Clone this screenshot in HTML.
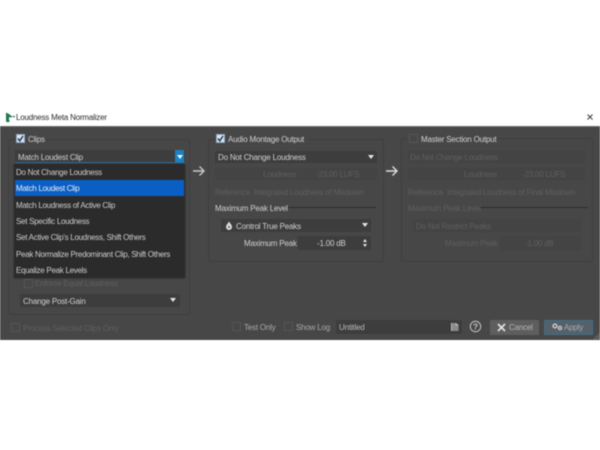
<!DOCTYPE html>
<html>
<head>
<meta charset="utf-8">
<style>
html,body{margin:0;padding:0;background:#fff;}
body{width:600px;height:450px;position:relative;overflow:hidden;font-family:"Liberation Sans",sans-serif;}
#w{position:absolute;left:0;top:0;width:600px;height:450px;filter:blur(0.45px);}
.a{position:absolute;}
.t{position:absolute;font-size:8px;letter-spacing:-0.2px;line-height:12px;white-space:nowrap;color:#d0d0d0;margin-top:1px;}
.d{color:#5f5f5f;}
.g{position:absolute;border:1px solid #3f3f3f;border-radius:2px;box-sizing:border-box;}
.f{position:absolute;background:#3d3d3d;}
.df{position:absolute;background:#444;}
.cb{position:absolute;width:9px;height:9px;box-sizing:border-box;border:1px solid #555;background:#474747;}
.cb.on{background:#dfe6ee;border:1px solid #8fa6bd;}
.arr{position:absolute;width:0;height:0;border-left:3px solid transparent;border-right:3px solid transparent;border-top:4px solid #e6e6e6;}
.m{position:absolute;left:16px;font-size:8px;letter-spacing:-0.28px;color:#cdcdcd;line-height:16px;height:16px;white-space:nowrap;margin-top:1px;}
</style>
</head>
<body>
<div id="w">
<!-- title bar -->
<div class="a" style="left:0;top:109px;width:600px;height:17px;background:#fff;"></div>
<svg class="a" style="left:5px;top:112px;" width="10" height="11" viewBox="0 0 10 11"><path d="M1 0.5 L4 2 L6.5 4 L8 4.5 L6 5.5 L4 5 L4 8 L5 9 L3 10.5 L1 9.5 Z" fill="#1c7a52"/><circle cx="9" cy="4.5" r="0.8" fill="#222"/></svg>
<div class="t" style="left:16px;top:111px;color:#2a2a2a;font-size:8px;letter-spacing:-0.2px;">Loudness Meta Normalizer</div>
<svg class="a" style="left:586px;top:113px;" width="8" height="8" viewBox="0 0 8 8"><path d="M1.5 1.5 L6.5 6.5 M6.5 1.5 L1.5 6.5" stroke="#333" stroke-width="0.9"/></svg>

<!-- body -->
<div class="a" style="left:0;top:126px;width:600px;height:214px;background:#474747;border-top:1px solid #6a6a6a;box-sizing:border-box;"></div>

<!-- Clips group -->
<div class="g" style="left:8px;top:139px;width:182px;height:176px;"></div>
<div class="a" style="left:26px;top:133px;width:20px;height:12px;background:#474747;"></div>
<div class="cb on" style="left:16px;top:134px;"></div>
<svg class="a" style="left:16px;top:134px;" width="9" height="9" viewBox="0 0 9 9"><path d="M2 4.5 L3.8 6.8 L7 2" fill="none" stroke="#1e3f66" stroke-width="1.5"/></svg>
<div class="t" style="left:28px;top:133px;">Clips</div>
<div class="f" style="left:15px;top:150px;width:170px;height:13px;border-bottom:1px solid #2e6f9c;box-sizing:border-box;"></div>
<div class="t" style="left:18px;top:151px;">Match Loudest Clip</div>
<div class="a" style="left:175px;top:150px;width:9px;height:13px;background:#1f7fc0;"></div>
<div class="arr" style="left:176.5px;top:155px;border-top-color:#dff;"></div>

<!-- Dropdown list -->
<div class="a" style="left:14px;top:164px;width:171px;height:114px;background:#2b2b2b;box-shadow:0 0 2px #2a2a2a;"></div>
<div class="a" style="left:15px;top:180px;width:169px;height:16px;background:#0a5fc4;"></div>
<div class="m" style="top:164px;">Do Not Change Loudness</div>
<div class="m" style="top:180px;color:#e8eef6;">Match Loudest Clip</div>
<div class="m" style="top:197px;">Match Loudness of Active Clip</div>
<div class="m" style="top:213px;">Set Specific Loudness</div>
<div class="m" style="top:229px;">Set Active Clip's Loudness, Shift Others</div>
<div class="m" style="top:246px;">Peak Normalize Predominant Clip, Shift Others</div>
<div class="m" style="top:262px;">Equalize Peak Levels</div>

<!-- Behind dropdown -->
<div class="cb" style="left:24px;top:279px;"></div>
<div class="t d" style="left:35px;top:277px;">Enforce Equal Loudness</div>
<div class="f" style="left:20px;top:294px;width:160px;height:13px;"></div>
<div class="t" style="left:23px;top:295px;">Change Post-Gain</div>
<div class="arr" style="left:170px;top:298px;"></div>
<div class="cb" style="left:11px;top:323px;"></div>
<div class="t d" style="left:23px;top:322px;">Process Selected Clips Only</div>

<!-- arrows -->
<svg class="a" style="left:192px;top:165px;" width="14" height="12" viewBox="0 0 14 12"><path d="M1 6 H12 M7.5 1.5 L12 6 L7.5 10.5" fill="none" stroke="#c8c8c8" stroke-width="1.4"/></svg>
<svg class="a" style="left:385px;top:165px;" width="14" height="12" viewBox="0 0 14 12"><path d="M1 6 H12 M7.5 1.5 L12 6 L7.5 10.5" fill="none" stroke="#dcdcdc" stroke-width="1.4"/></svg>

<!-- Montage group -->
<div class="g" style="left:208px;top:139px;width:176px;height:123px;"></div>
<div class="a" style="left:215px;top:133px;width:93px;height:12px;background:#474747;"></div>
<div class="cb on" style="left:216px;top:134px;"></div>
<svg class="a" style="left:216px;top:134px;" width="9" height="9" viewBox="0 0 9 9"><path d="M2 4.5 L3.8 6.8 L7 2" fill="none" stroke="#1e3f66" stroke-width="1.5"/></svg>
<div class="t" style="left:228px;top:133px;">Audio Montage Output</div>
<div class="f" style="left:215px;top:151px;width:162px;height:12px;"></div>
<div class="t" style="left:218px;top:151px;">Do Not Change Loudness</div>
<div class="arr" style="left:368px;top:155px;"></div>
<div class="df" style="left:215px;top:168px;width:162px;height:12px;"></div>
<div class="t d" style="left:263px;top:168px;">Loudness</div>
<div class="t d" style="left:316px;top:168px;">-23.00 LUFS</div>
<div class="t d" style="left:215px;top:186px;">Reference</div>
<div class="t d" style="left:254px;top:186px;">Integrated Loudness of Mixdown</div>
<div class="t" style="left:215px;top:202px;">Maximum Peak Level</div>
<div class="a" style="left:288px;top:207px;width:88px;height:1px;background:#2c2c2c;"></div>
<div class="f" style="left:221px;top:219px;width:150px;height:13px;"></div>
<svg class="a" style="left:225px;top:221px;" width="8" height="9" viewBox="0 0 8 9"><path d="M4 0.5 C5 2.5 7 4 7 6 A3 3 0 0 1 1 6 C1 4 3 2.5 4 0.5 Z" fill="#dcdcdc"/><circle cx="4" cy="6" r="1" fill="#555"/></svg>
<div class="t" style="left:236px;top:220px;">Control True Peaks</div>
<div class="arr" style="left:362px;top:223px;"></div>
<div class="t" style="left:244px;top:237px;">Maximum Peak</div>
<div class="f" style="left:298px;top:236px;width:73px;height:14px;"></div>
<div class="t" style="left:317px;top:237px;">-1.00 dB</div>
<div class="arr" style="left:363px;top:244px;border-left-width:2px;border-right-width:2px;border-top-width:3px;"></div>
<div class="arr" style="left:363px;top:239px;border-left-width:2px;border-right-width:2px;border-top:0;border-bottom:3px solid #e6e6e6;"></div>

<!-- Master group -->
<div class="g" style="left:401px;top:138px;width:192px;height:124px;"></div>
<div class="a" style="left:407px;top:133px;width:91px;height:12px;background:#474747;"></div>
<div class="cb" style="left:409px;top:134px;"></div>
<div class="t" style="left:421px;top:133px;">Master Section Output</div>
<div class="df" style="left:408px;top:151px;width:177px;height:12px;"></div>
<div class="t d" style="left:410px;top:151px;">Do Not Change Loudness</div>
<div class="df" style="left:408px;top:168px;width:177px;height:12px;"></div>
<div class="t d" style="left:464px;top:168px;">Loudness</div>
<div class="t d" style="left:522px;top:168px;">-23.00 LUFS</div>
<div class="t d" style="left:408px;top:186px;">Reference</div>
<div class="t d" style="left:447px;top:186px;">Integrated Loudness of Final Mixdown</div>
<div class="t d" style="left:408px;top:202px;">Maximum Peak Level</div>
<div class="a" style="left:480px;top:207px;width:108px;height:1px;background:#2c2c2c;"></div>
<div class="df" style="left:413px;top:219px;width:168px;height:13px;"></div>
<div class="t d" style="left:416px;top:220px;">Do Not Restrict Peaks</div>
<div class="t d" style="left:445px;top:237px;">Maximum Peak</div>
<div class="df" style="left:500px;top:236px;width:81px;height:14px;"></div>
<div class="t d" style="left:525px;top:237px;">-1.00 dB</div>

<!-- Bottom bar -->
<div class="cb" style="left:232px;top:322px;"></div>
<div class="t" style="left:244px;top:321px;color:#a8a8a8;">Test Only</div>
<div class="cb" style="left:284px;top:322px;"></div>
<div class="t" style="left:296px;top:321px;color:#a8a8a8;">Show Log</div>
<div class="f" style="left:336px;top:320px;width:126px;height:14px;"></div>
<div class="t" style="left:339px;top:321px;color:#b8b8b8;">Untitled</div>
<svg class="a" style="left:450px;top:322px;" width="10" height="10" viewBox="0 0 10 10"><path d="M1.5 1 H6 L8.5 3 V9 H1.5 Z" fill="#8a8a8a"/><path d="M6 1 V3 H8.5" fill="none" stroke="#cfcfcf" stroke-width="0.8"/><path d="M1.5 1 V9" stroke="#cfcfcf" stroke-width="0.8"/></svg>
<svg class="a" style="left:469px;top:320px;" width="13" height="13" viewBox="0 0 13 13"><circle cx="6.5" cy="6.5" r="5.2" fill="none" stroke="#c8c8c8" stroke-width="1"/><text x="6.5" y="9.5" text-anchor="middle" font-family="Liberation Sans" font-size="8.5" font-weight="bold" fill="#c8c8c8">?</text></svg>

<div class="a" style="left:490px;top:320px;width:49px;height:15px;background:#5e5e5e;border-radius:1px;"></div>
<svg class="a" style="left:497px;top:323px;" width="9" height="9" viewBox="0 0 9 9"><path d="M1 1 L8 8 M8 1 L1 8" stroke="#e4e4e4" stroke-width="1.7"/></svg>
<div class="t" style="left:509px;top:321px;color:#b4b4b4;">Cancel</div>

<div class="a" style="left:544px;top:320px;width:49px;height:15px;background:#566069;border:1px solid #3f6f88;box-sizing:border-box;border-radius:1px;"></div>
<svg class="a" style="left:552px;top:323px;" width="11" height="8" viewBox="0 0 11 8"><circle cx="3" cy="3" r="1.9" fill="none" stroke="#d8d8d8" stroke-width="1.3"/><circle cx="8" cy="5" r="1.6" fill="none" stroke="#d8d8d8" stroke-width="1.2"/></svg>
<div class="t" style="left:564px;top:321px;color:#a8adb1;">Apply</div>

<!-- grip -->
<svg class="a" style="left:593px;top:333px;" width="7" height="8" viewBox="0 0 7 8"><g fill="#9a9a9a"><rect x="5" y="1" width="1" height="1"/><rect x="3" y="3" width="1" height="1"/><rect x="5" y="3" width="1" height="1"/><rect x="1" y="5" width="1" height="1"/><rect x="3" y="5" width="1" height="1"/><rect x="5" y="5" width="1" height="1"/></g></svg>
</div>
</body>
</html>
